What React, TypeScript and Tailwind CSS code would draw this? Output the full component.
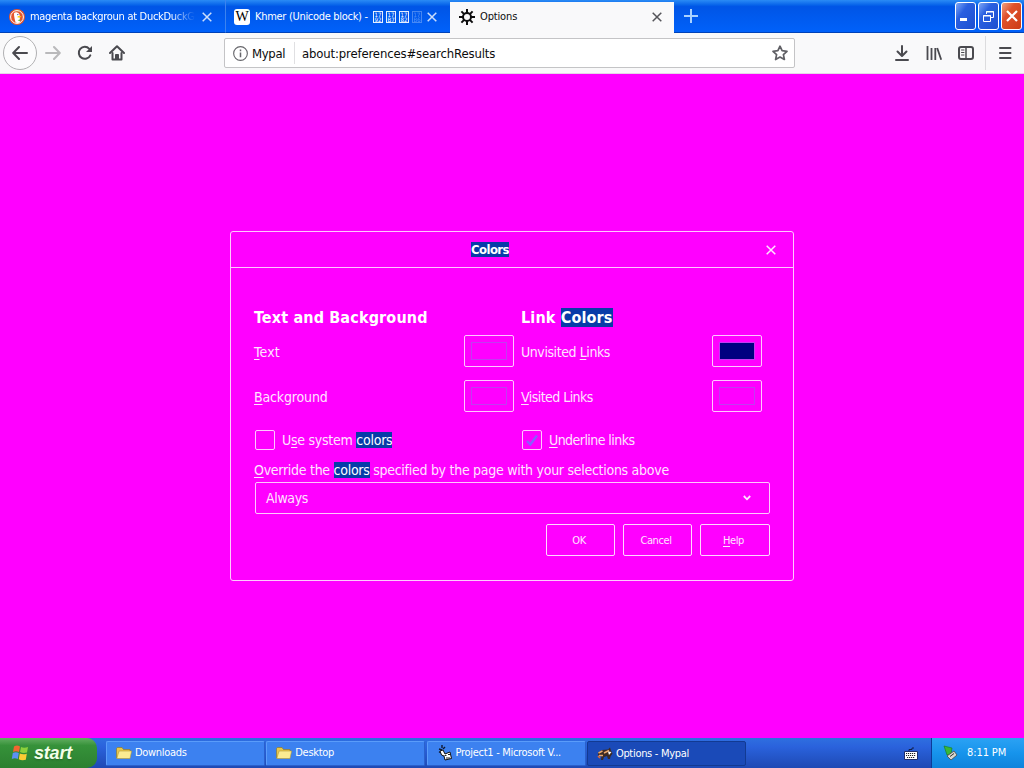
import { ReactNode } from "react";
import { clsx } from "clsx";

type Props = {
  children?: ReactNode;
  className?: string;
};

const Cross = ({ className }: Props) => (
  <svg viewBox="0 0 10 10" className={clsx("size-[10px] shrink-0", className)}>
    <path d="M0.7 0.7 9.3 9.3M9.3 0.7 0.7 9.3" stroke="currentColor" strokeWidth="1.5" />
  </svg>
);

const DuckIcon = () => (
  <svg viewBox="0 0 16 16" className="size-4 shrink-0">
    <circle cx="8" cy="8" r="8" fill="#e4572e" />
    <circle cx="8" cy="8" r="6.4" fill="#e4572e" stroke="#fff" strokeWidth="1" />
    <path d="M5 4.300C6.200 2.600 10 3 10.600 6c.3 2 .1 5 .6 7.300-1.400.9-3.200 1-4.600.3C6 11 4.800 7 5 4.300z" fill="#fff" />
    <path d="M8.500 7.400c1.500-.7 3.300-.6 4 0-.6.900-2.200 1.200-3.900 1.200z" fill="#fdd209" />
    <circle cx="8.800" cy="5.600" r=".7" fill="#2d4f8e" />
    <path d="M8.600 11.200l2.600-1v2.400z" fill="#65bc46" />
  </svg>
);

const GearIcon = () => (
  <svg viewBox="0 0 16 16" className="size-4 shrink-0">
    <g stroke="#0c0c0d" strokeWidth="2">
      <path d="M8 0v16M0 8h16M2.400 2.400l11.200 11.200M13.600 2.400 2.400 13.600" />
    </g>
    <circle cx="8" cy="8" r="4" fill="#f9f9fa" stroke="#0c0c0d" strokeWidth="2" />
  </svg>
);

// Missing glyphs are shown as a box with their code point
const HexBox = ({ code, className }: { code: string; className?: string }) => (
  <span
    className={clsx(
      "flex h-3 w-[10px] shrink-0 flex-col items-center justify-center border border-white/90 text-[6px] leading-[5px] tracking-normal",
      className
    )}
  >
    <span>17</span>
    <span>{code}</span>
  </span>
);

const WindowButton = ({ children, className }: Props) => (
  <button
    className={clsx(
      "flex h-7 w-[21px] items-center justify-center rounded-[3px] border border-white bg-linear-to-br",
      className
    )}
  >
    {children}
  </button>
);

const TabStrip = () => (
  <div className="flex h-[33px] bg-linear-to-b from-[#2a8bf5] via-[#0055e6] via-20% to-[#0062fb] text-[11px] text-white">
    <div className="flex w-[225px] items-center border-b border-[#0042b8] pt-[2px] pl-[9px] pr-3">
      <DuckIcon />
      <span className="ml-[5px] w-[165px] whitespace-nowrap mask-r-from-85% tracking-[-0.3px]">
        magenta backgroun at DuckDuckG
      </span>
      <Cross className="ml-[7px] text-white/80" />
    </div>
    <div className="flex w-[225px] items-center border-b border-l border-b-[#0042b8] border-l-[#3c83ef] pt-[2px] pl-2 pr-3">
      <span className="flex size-4 shrink-0 items-center justify-center rounded-[3px] bg-white font-['Liberation_Serif',serif] text-[14px] leading-none text-black">
        W
      </span>
      <span className="ml-[5px] w-[118px] shrink-0 whitespace-nowrap tracking-[-0.3px]">
        Khmer (Unicode block) -
      </span>
      <span className="flex w-[48px] gap-[3px]">
        <HexBox code="92" />
        <HexBox code="B7" />
        <HexBox code="82" />
        <HexBox code="B6" className="opacity-30" />
      </span>
      <Cross className="ml-[6px] text-white/80" />
    </div>
    <div className="mt-[2px] flex w-[224px] items-center bg-[#f9f9fa] pl-[9px] pr-3 pb-px text-[#0c0c0d]">
      <GearIcon />
      <span className="ml-[5px] flex-1 pt-px tracking-[-0.15px]">Options</span>
      <Cross className="text-[#55555a]" />
    </div>
    <div className="flex flex-1 items-center border-b border-[#0042b8] pl-[10px]">
      <svg viewBox="0 0 14 14" className="size-[14px] text-[#a9d2ff]">
        <path d="M7 0v14M0 7h14" stroke="currentColor" strokeWidth="2" />
      </svg>
    </div>
    <div className="flex gap-[2px] border-b border-[#0042b8] pr-[2px] pt-[2px]">
      <WindowButton className="from-[#7fa5f5] via-[#2a5fe0] via-35% to-[#1c4fd0]">
        <span className="mr-1 mt-[7px] h-[3px] w-[7px] bg-white" />
      </WindowButton>
      <WindowButton className="from-[#7fa5f5] via-[#2a5fe0] via-35% to-[#1c4fd0]">
        <svg viewBox="0 0 11 11" className="size-[11px]" fill="none" stroke="#fff">
          <path d="M3.500 3V.5h7v6H8M3 1h8" />
          <path d="M.5 4.500h7v6h-7zM0 5h8" />
        </svg>
      </WindowButton>
      <WindowButton className="from-[#f0a080] via-[#e0522c] via-35% to-[#cc3c14]">
        <svg viewBox="0 0 12 12" className="size-3">
          <path d="M1 1l10 10M11 1 1 11" stroke="#fff" strokeWidth="2.200" />
        </svg>
      </WindowButton>
    </div>
  </div>
);

const ToolIcon = ({ children, className }: Props) => (
  <svg
    viewBox="0 0 16 16"
    className={clsx("size-4 shrink-0", className)}
    fill="none"
    stroke="currentColor"
    strokeWidth="2"
    strokeLinecap="round"
    strokeLinejoin="round"
  >
    {children}
  </svg>
);

const Toolbar = () => (
  <div className="flex h-[41px] items-center border-b border-[#e6d5e8] bg-[#f9f9fa] pl-[3px] text-[#4a4a4f]">
    <button className="flex size-[34px] items-center justify-center rounded-full border border-[#b1b1b3] bg-[#fcfcfd]">
      <ToolIcon>
        <path d="M15 8H1.500M7 2 1.200 8 7 14" />
      </ToolIcon>
    </button>
    <ToolIcon className="ml-2 text-[#b9b9bb]">
      <path d="M1 8h13.500M9 2l5.800 6L9 14" />
    </ToolIcon>
    <ToolIcon className="ml-4">
      <path d="M13.300 10.300A6 6 0 1 1 12.300 3.800" />
      <path d="M15 1v6H9z" fill="currentColor" stroke="none" />
    </ToolIcon>
    <ToolIcon className="ml-4">
      <path d="M1 8l7-6.800L15 8" />
      <path d="M3.500 8v6.500h9V8" />
      <path d="M6.500 14V9.500h3V14z" fill="currentColor" strokeWidth="1" />
    </ToolIcon>
    <div className="ml-[99px] flex h-[30px] w-[571px] items-center rounded-[2px] border border-[#c4c4c6] bg-white text-[13px] text-[#0c0c0d]">
      <svg viewBox="0 0 16 16" className="ml-2 size-[15px] text-[#66666b]" fill="none" stroke="currentColor">
        <circle cx="8" cy="8" r="7.300" strokeWidth="1.200" />
        <path d="M8 7v5M8 3.800v1.700" strokeWidth="1.600" />
      </svg>
      <span className="ml-1 w-[42px] pt-px tracking-[-0.35px]">Mypal</span>
      <span className="h-[22px] w-px bg-[#e0e0e2]" />
      <span className="ml-[7px] flex-1 pt-px tracking-[-0.15px]">about:preferences#searchResults</span>
      <ToolIcon className="mr-[6px] text-[#606065]">
        <path
          strokeWidth="1.700"
          d="M8 1.200l2.100 4.500 4.900.6-3.600 3.300 1 4.900L8 12l-4.400 2.500 1-4.900L1 6.300l4.900-.6z"
        />
      </ToolIcon>
    </div>
    <ToolIcon className="ml-[99px]">
      <path d="M8 1v9.500M3.500 6.500 8 11l4.500-4.500M2 15h12" />
    </ToolIcon>
    <ToolIcon className="ml-4">
      <path strokeLinecap="butt" d="M1.500 1v14M5.500 3v12M9.300 3v12M11.200 3l4 11.800" strokeWidth="1.800" />
    </ToolIcon>
    <ToolIcon className="ml-4">
      <rect x="1" y="2" width="14" height="12" rx="2" />
      <path d="M8 2v12" strokeWidth="1.500" />
      <path d="M3.500 5H6M3.500 7.500H6M3.500 10H6" strokeWidth="1" />
    </ToolIcon>
    <span className="ml-[11px] h-[34px] w-px bg-[#dcdcde]" />
    <ToolIcon className="ml-[11px]">
      <path d="M3 3h10.500M3 8h10.500M3 13h10.500" />
    </ToolIcon>
  </div>
);

const Mark = ({ children }: Props) => (
  <mark className="bg-[#083ca8] text-white">{children}</mark>
);

const Key = ({ children }: Props) => (
  <span className="underline decoration-1 underline-offset-2">{children}</span>
);

const Swatch = ({ className }: Props) => (
  <button className="flex h-8 w-[50px] items-center justify-center rounded-[2px] border border-[#ffc8ff]">
    <span className={clsx("mr-px h-[18px] w-9 border border-[#c23cf0]", className)} />
  </button>
);

const CheckBox = ({ checked }: { checked?: boolean }) => (
  <span className="flex size-5 items-center justify-center rounded-[2px] border border-[#ffc8ff]">
    {checked && (
      <svg viewBox="0 0 12 12" className="size-3">
        <path d="M1 7l3.300 3.500L11 1.500" fill="none" stroke="#8a5cff" strokeWidth="2.400" />
      </svg>
    )}
  </span>
);

const DialogButton = ({ children, className }: Props) => (
  <button
    className={clsx(
      "h-8 rounded-[2px] border border-[#ffd8ff] pt-px pr-[3px] text-[11px] tracking-[-0.4px]",
      className
    )}
  >
    {children}
  </button>
);

const ColorsDialog = () => (
  <div className="flex h-[350px] w-[564px] flex-col rounded-[3px] border border-[#ffc8ff] text-[14px] text-[#ffe4ff]">
    <div className="flex h-9 items-center border-b border-[#ffc8ff] pr-[17px]">
      <h1 className="flex-1 pr-[17px] text-center text-[13px] leading-[15px] font-bold tracking-[-0.6px]">
        <Mark>Colors</Mark>
      </h1>
      <Cross />
    </div>
    <div className="flex flex-col pl-[23px] pr-[23px] pt-[39px] leading-[18px] tracking-[-0.35px]">
      <div className="flex h-[22px] items-center text-[16px] leading-[20px] font-bold tracking-[0.15px] text-white">
        <h2 className="w-[267px]">Text and Background</h2>
        <h2>
          Link <Mark>Colors</Mark>
        </h2>
      </div>
      <div className="mt-[6px] grid grid-cols-[210px_57px_191px_50px] items-center gap-y-[13px]">
        <span className="pt-[2px] tracking-[0.2px]">
          <Key>T</Key>ext
        </span>
        <Swatch />
        <span className="pt-[2px] tracking-[-0.42px]">
          Unvisited <Key>L</Key>inks
        </span>
        <Swatch className="bg-[#000080]" />
        <span className="pt-[2px] tracking-[-0.15px]">
          <Key>B</Key>ackground
        </span>
        <Swatch />
        <span className="pt-[2px] tracking-[-0.55px]">
          <Key>V</Key>isited Links
        </span>
        <Swatch />
      </div>
      <div className="mt-[18px] flex h-5 items-center pl-px">
        <div className="flex w-[267px] items-center gap-[7px]">
          <CheckBox />
          <span className="tracking-[-0.25px]">
            U<Key>s</Key>e system <Mark>colors</Mark>
          </span>
        </div>
        <div className="flex items-center gap-[7px]">
          <CheckBox checked />
          <span className="tracking-[-0.55px]">
            <Key>U</Key>nderline links
          </span>
        </div>
      </div>
      <span className="mt-[11px] whitespace-nowrap tracking-[-0.275px]">
        <Key>O</Key>verride the <Mark>colors</Mark> specified by the page with your selections above
      </span>
      <div className="mt-[3px] ml-px flex h-8 items-center justify-between rounded-[2px] border border-[#ffc8ff] pr-[18px] pl-[10px]">
        <span>Always</span>
        <svg viewBox="0 0 8 6" className="h-[6px] w-2">
          <path d="M.8 1 4 4.300 7.200 1" fill="none" stroke="currentColor" strokeWidth="1.800" />
        </svg>
      </div>
      <div className="mt-[10px] flex justify-end gap-2">
        <DialogButton className="w-[69px]">OK</DialogButton>
        <DialogButton className="w-[69px]">Cancel</DialogButton>
        <DialogButton className="w-[70px]">
          <Key>H</Key>elp
        </DialogButton>
      </div>
    </div>
  </div>
);

const FolderIcon = () => (
  <svg viewBox="0 0 16 16" className="size-4 shrink-0">
    <path d="M.5 13V3.500l1-1H6l1.500 2H14v2" fill="#e8c64c" stroke="#8a7420" strokeWidth=".6" />
    <path d="M.8 13.500 3 6h12.600l-1.600 7.500z" fill="#fbeb92" stroke="#b59a34" strokeWidth=".6" />
  </svg>
);

const ProjectIcon = () => (
  <svg viewBox="0 0 16 16" className="size-4 shrink-0">
    <path d="M2 4l3 1M5 0v3M2 7.500l3-2M8 2 6 4" stroke="#101830" strokeWidth="1.400" />
    <path d="M3 6l3-1 2 4 5-2 1.500 6.500-6.500 1.500-1-4-2.500-1z" fill="#fff" stroke="#101010" />
    <path d="M7.500 10.500h2M11 9.500h2M9 13h4" stroke="#222" />
  </svg>
);

const MypalIcon = () => (
  <svg viewBox="0 0 16 16" className="size-4 shrink-0">
    <path d="M1 7l4-3 6-.5L13 1.500l1 3 1.500 3-2 3L13 13h-2l-1-3-3 1-1 3H4l.5-4L1 9z" fill="#3c2a24" />
    <path d="M1.500 7l4-2M7 7l5-2.500M2 9.500h4" stroke="#e9a76c" strokeWidth="1.500" />
    <path d="M11 5.500l3.500.5-2.500 3z" fill="#fff" />
    <path d="M1 10l2 2" stroke="#e46a30" strokeWidth="1.500" />
  </svg>
);

const Task = ({ icon, label, active }: { icon: ReactNode; label: string; active?: boolean }) => (
  <div
    className={clsx(
      "flex h-[25px] w-[159px] items-center gap-[3px] rounded-[2px] border pl-[9px]",
      active
        ? "border-[#123a92] bg-[#1a4ab8] pt-px"
        : "border-[#5a9cfa] border-r-[#2a60cc] border-b-[#2a60cc] bg-[#3c81f0]"
    )}
  >
    {icon}
    <span className="pt-px whitespace-nowrap">{label}</span>
  </div>
);

const Taskbar = () => (
  <div className="flex h-[30px] items-center bg-linear-to-b from-[#2f6fe0] via-[#2a62dc] via-30% to-[#1e49b4] text-[11px] tracking-[-0.3px] text-white">
    <button className="flex h-full w-[97px] items-center rounded-r-[10px] bg-linear-to-b from-[#62ae62] via-[#36923a] via-25% to-[#2c8030] pl-[11px]">
      <svg viewBox="0 0 18 18" className="size-[18px]">
        <path d="M3 2.500q3-2 6 0L8 8Q5 6.500 2 8z" fill="#f26530" />
        <path d="M10 3q3 1.500 7 0L16 8.500q-4 1-7-.500z" fill="#8cd03c" />
        <path d="M1.800 9q3-1.700 6 0l-1 6q-3-1.500-6 0z" fill="#5c90f4" />
        <path d="M8.800 9.500q3 1.500 7 .300l-1 6q-4 1-7-.500z" fill="#fccc34" />
      </svg>
      <span className="ml-[5px] font-['Liberation_Sans',sans-serif] text-[18px] leading-none font-bold text-[#f4ffe8] italic tracking-[-0.2px] text-shadow-sm">
        start
      </span>
    </button>
    <div className="ml-[9px] flex gap-[1.300px]">
      <Task icon={<FolderIcon />} label="Downloads" />
      <Task icon={<FolderIcon />} label="Desktop" />
      <Task icon={<ProjectIcon />} label="Project1 - Microsoft V..." />
      <Task icon={<MypalIcon />} label="Options - Mypal" active />
    </div>
    <div className="flex flex-1 justify-end pr-[13px]">
      <svg viewBox="0 0 14 13" className="h-[13px] w-[14px]">
        <path d="M5 4V2.500h3V1h2" fill="none" stroke="#10204c" />
        <path d="M.5 4.500h13v8H.5z" fill="#fff" stroke="#20306c" />
        <path d="M2 6.500h10M2 8.500h10M3 10.500h8" stroke="#222" strokeDasharray="1.200 .8" />
      </svg>
    </div>
    <div className="flex h-full w-[93px] items-center border-l border-[#0c3c98] bg-linear-to-b from-[#2ba2f4] via-[#1694ec] to-[#0f83dc] pl-[10px]">
      <svg viewBox="0 0 16 16" className="size-4">
        <path d="M2 1l8 2-1 6-4 1z" fill="#38b838" stroke="#187820" strokeWidth=".6" />
        <path d="M5 11l7-5 3 4-6 5z" fill="#d8d8d0" stroke="#484848" strokeWidth=".8" />
        <path d="M8 11.500l4-3" stroke="#303030" />
      </svg>
      <span className="ml-[9px] pt-px whitespace-nowrap tracking-[-0.1px]">8:11 PM</span>
    </div>
  </div>
);

const App = () => {
  return (
    <div className="flex h-[768px] w-[1024px] flex-col overflow-hidden font-['DejaVu_Sans_Condensed','DejaVu_Sans',sans-serif]">
      <TabStrip />
      <Toolbar />
      <main className="flex flex-1 items-center justify-center bg-[#ff00ff]">
        <ColorsDialog />
      </main>
      <Taskbar />
    </div>
  );
};

export default App;
